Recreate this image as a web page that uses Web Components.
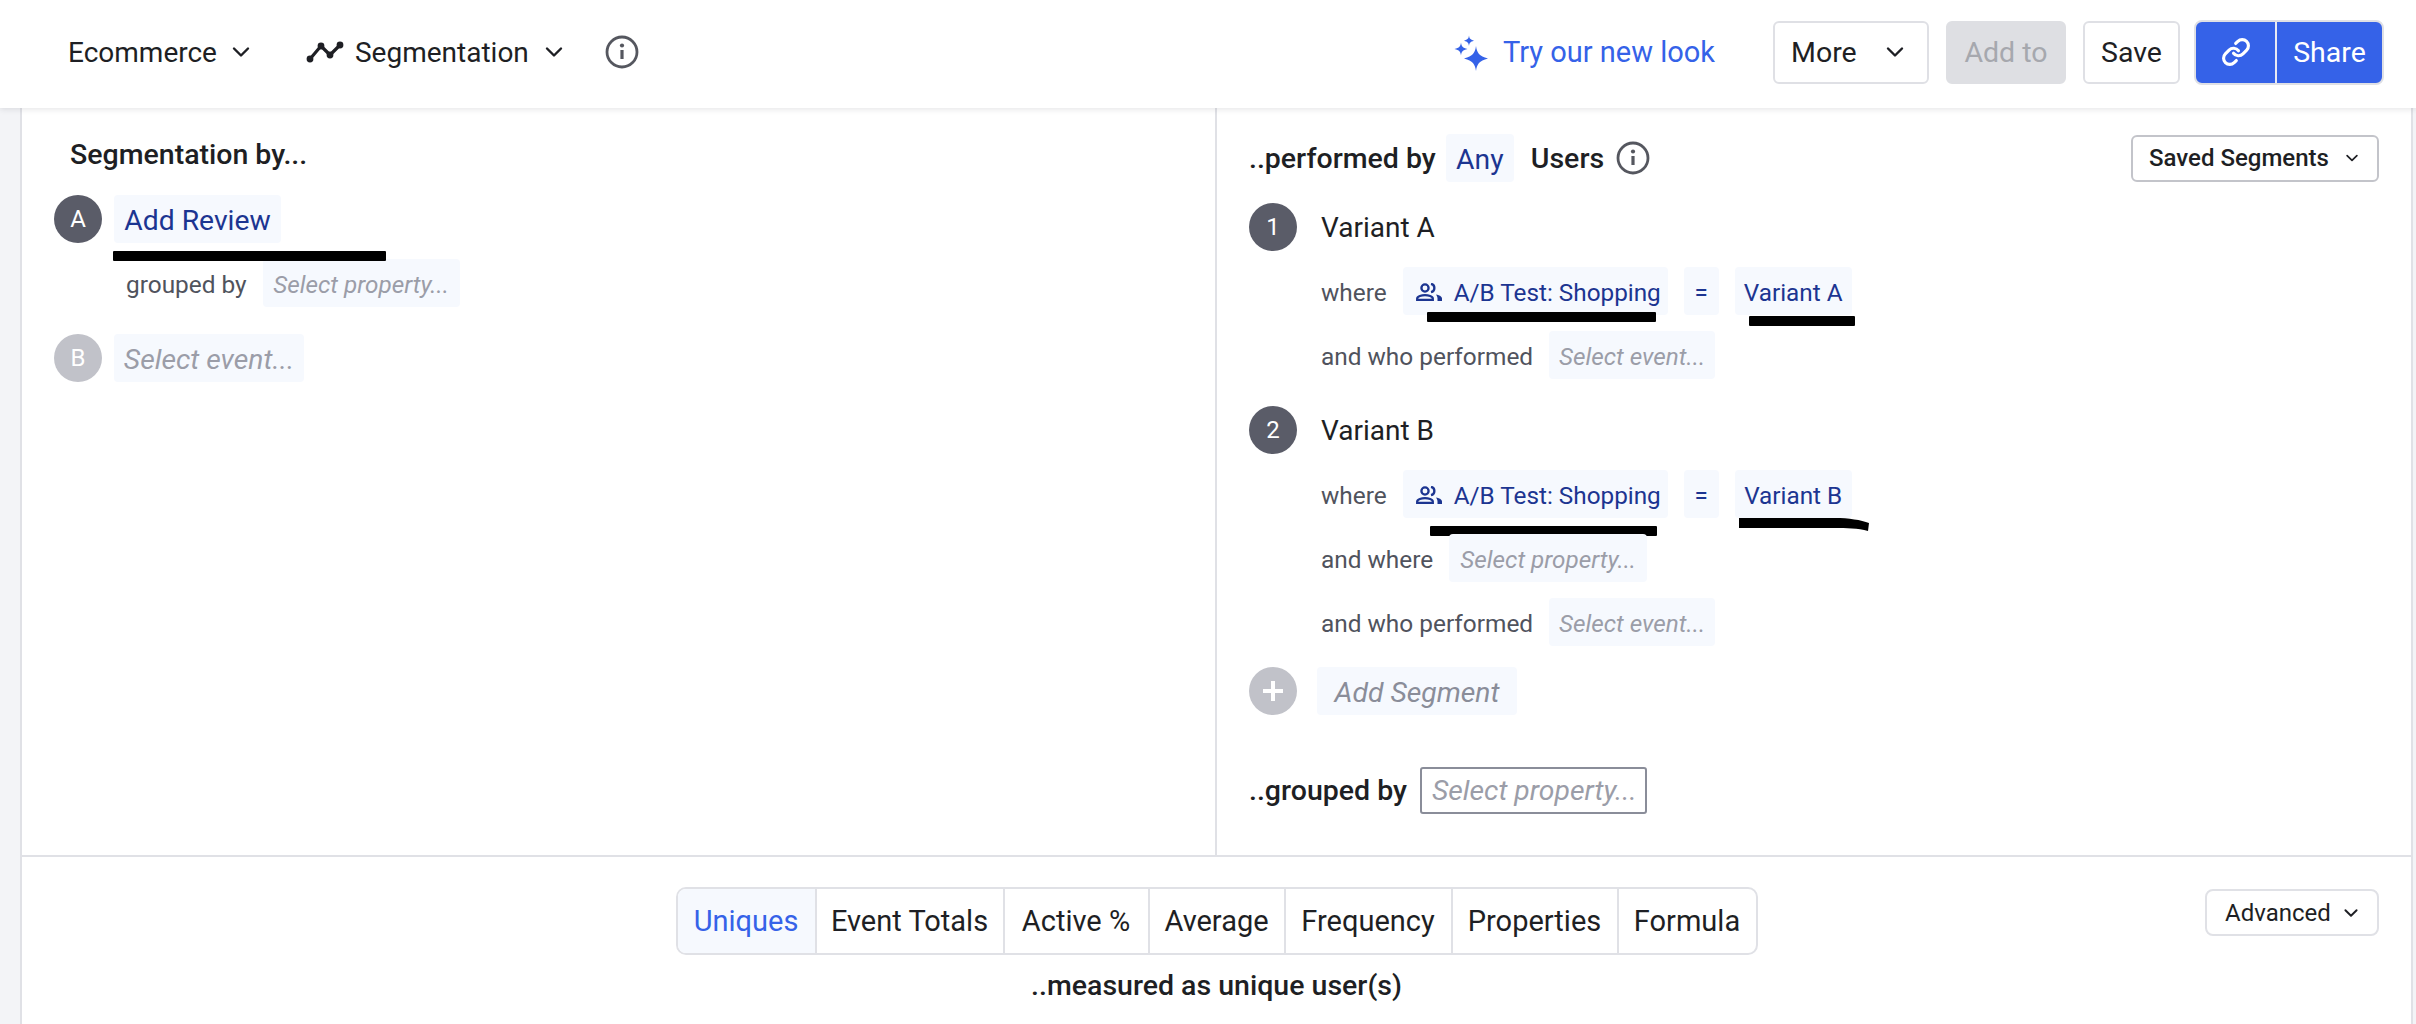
<!DOCTYPE html>
<html>
<head>
<meta charset="utf-8">
<title>Segmentation</title>
<style>
html, body { margin: 0; height: 1024px; overflow: hidden; }
body {
  background: #f3f4f7;
  font-family: Roboto, "Liberation Sans", sans-serif;
  color: #1e1f24;
}
</style>
</head>
<body>
<seg-page>
  <top-bar slot="top"></top-bar>
  <query-panels slot="main"></query-panels>
  <metric-bar slot="bottom"></metric-bar>
</seg-page>

<script>
//shared svg icons
const chevron = (size) => `<svg width="${size}" height="${size}" viewBox="0 0 20 20" fill="none" stroke="currentColor" stroke-width="2.4" stroke-linecap="round" stroke-linejoin="round"><path d="M3 6.5l7 7 7-7"/></svg>`;
const peopleIcon = `<svg width="26" height="18" viewBox="0 0 26 18" fill="none" stroke="#1c3591" stroke-width="2.3">
  <circle cx="9" cy="5" r="3.6"/>
  <path d="M1.200 16.800v-1.300c0-2.300 4.500-3.300 7.800-3.300s7.800 1 7.800 3.300v1.300z"/>
  <path d="M15 .8a4.300 4.300 0 0 1 0 8.400"/>
  <path d="M20 11.500c3 .5 6 1.800 6 4V18h-4.500v-2.500c0-1.500-.6-2.800-1.500-4z" fill="#1c3591" stroke="none"/>
</svg>`;

//page frame, the gutters on both sides are just the body showing through
class SegPage extends HTMLElement {
  constructor() {
    super();
    this.attachShadow({mode: "open"});
    this.shadowRoot.innerHTML = `
    <style>
      :host { display: block; height: 1024px; }
      .frame {
        margin: 0 3px 0 20px;
        height: 916px;
        background: #fff;
        border-left: 2px solid #e0e1e6;
        border-right: 2px solid #e0e1e6;
      }
    </style>
    <slot name="top"></slot>
    <div class="frame">
      <slot name="main"></slot>
      <slot name="bottom"></slot>
    </div>`;
  }
}
customElements.define("seg-page", SegPage);

//info circle
class InfoIcon extends HTMLElement {
  constructor() {
    super();
    this.attachShadow({mode: "open"});
    this.shadowRoot.innerHTML = `
    <style>:host { display: inline-flex; color: #55575f; }</style>
    <svg width="34" height="34" viewBox="0 0 34 34" fill="none" stroke="currentColor">
      <circle cx="17" cy="17" r="15" stroke-width="2.8"/>
      <path d="M17 15v9" stroke-width="3.200"/>
      <circle cx="17" cy="10.500" r="2.100" fill="currentColor" stroke="none"/>
    </svg>`;
  }
}
customElements.define("info-icon", InfoIcon);

//top bar buttons
class ToolButton extends HTMLElement {
  constructor() {
    super();
    this.attachShadow({mode: "open"});
    this.shadowRoot.innerHTML = `
    <style>
      :host {
        display: inline-flex; align-items: center; justify-content: center; box-sizing: border-box;
        height: 63px; border: 2px solid #dfe0e5; border-radius: 6px; background: #fff;
        font-size: 28.5px; color: #1e1f24;
      }
      :host([disabled]) { background: #dedfe3; border-color: #dedfe3; color: #a6a8ae; }
    </style>
    <slot></slot>`;
  }
}
customElements.define("tool-button", ToolButton);

class TopBar extends HTMLElement {
  constructor() {
    super();
    this.attachShadow({mode: "open"});
    this.shadowRoot.innerHTML = `
    <style>
      :host {
        display: flex; align-items: center; box-sizing: border-box; height: 108px;
        padding: 0 32px 4px 68px; background: #fff; position: relative; z-index: 2;
        box-shadow: 0 1px 6px rgba(30, 32, 45, .13);
        font-size: 28px; color: #1e1f24;
      }
      .menu { display: flex; align-items: center; }
      .new-look { display: flex; align-items: center; gap: 13px; margin-left: auto; font-size: 29px; color: #3562e8; }
      .more { width: 156px; padding: 0 22px 0 16px; justify-content: space-between; margin-left: 58px; }
      .add { width: 120px; margin-left: 17px; }
      .save { width: 97px; margin-left: 17px; }
      .share {
        display: flex; margin-left: 14px; height: 65px; box-sizing: border-box; width: 190px;
        background: #3562e8; color: #fff; border: 2px solid #dfe0e5; border-radius: 8px; overflow: hidden;
        font-size: 28.5px;
      }
      .share div { display: flex; align-items: center; justify-content: center; }
      .share .link { width: 79px; border-right: 2px solid #e8eaf4; }
      .share .txt { flex: 1; }
    </style>
    <div class="menu">Ecommerce<span style="display:inline-flex;margin-left:14px">${chevron(20)}</span></div>
    <div class="menu" style="margin-left:55px">
      <svg width="38" height="22" viewBox="0 0 38 22" fill="none" stroke="#1e1f24" stroke-width="3.2" stroke-linejoin="round" style="margin-right:11px">
        <path d="M4 18L15 5l9 9L34 4"/>
        <circle cx="4" cy="18" r="3.4" fill="#1e1f24" stroke="none"/>
        <circle cx="15" cy="5" r="3.4" fill="#1e1f24" stroke="none"/>
        <circle cx="24" cy="14" r="3.4" fill="#1e1f24" stroke="none"/>
        <circle cx="34" cy="4" r="3.4" fill="#1e1f24" stroke="none"/>
      </svg>
      Segmentation<span style="display:inline-flex;margin-left:15px">${chevron(20)}</span>
    </div>
    <info-icon style="margin-left:41px"></info-icon>
    <div class="new-look">
      <svg width="36" height="37" viewBox="0 0 36 37" fill="#3562e8">
        <path d="M22 12c1 7 3 10 12 12.500-9 2.500-11 5.500-12 12.500-1-7-3-10-12-12.500C19 22 21 19 22 12z"/>
        <path d="M7 8.500c.6 4 1.500 5.300 6.500 6.500-5 1.200-5.900 2.500-6.500 6.500-.6-4-1.500-5.300-6.500-6.500C5.500 13.800 6.400 12.500 7 8.500z"/>
        <path d="M15 1.500c.4 3 1.200 4.100 5 5.200-3.800 1.100-4.600 2.200-5 5.200-.4-3-1.200-4.100-5-5.200 3.800-1.100 4.600-2.200 5-5.200z"/>
      </svg>
      <span>Try our new look</span>
    </div>
    <tool-button class="more">More${chevron(20)}</tool-button>
    <tool-button class="add" disabled>Add to</tool-button>
    <tool-button class="save">Save</tool-button>
    <div class="share">
      <div class="link">
        <svg width="30" height="30" viewBox="0 0 24 24" fill="none" stroke="#fff" stroke-width="2.5" stroke-linecap="round" stroke-linejoin="round">
          <path d="M10 13a5 5 0 0 0 7.540.54l3-3a5 5 0 0 0-7.070-7.070l-1.720 1.710"/>
          <path d="M14 11a5 5 0 0 0-7.540-.54l-3 3a5 5 0 0 0 7.070 7.070l1.710-1.710"/>
        </svg>
      </div>
      <div class="txt">Share</div>
    </div>`;
  }
}
customElements.define("top-bar", TopBar);

//round letter at the start of a row
class RoundBadge extends HTMLElement {
  constructor() {
    super();
    this.attachShadow({mode: "open"});
    this.shadowRoot.innerHTML = `
    <style>
      :host {
        display: inline-flex; align-items: center; justify-content: center; flex: none;
        width: 48px; height: 48px; border-radius: 50%;
        background: #5a5c68; color: #fff; font-size: 24px;
      }
      :host([empty]) { background: #c1c2c9; }
    </style>
    <slot></slot>`;
  }
}
customElements.define("round-badge", RoundBadge);

//pale blue picker chip
class QueryChip extends HTMLElement {
  constructor() {
    super();
    this.attachShadow({mode: "open"});
    this.shadowRoot.innerHTML = `
    <style>
      :host {
        display: inline-flex; align-items: center; justify-content: center; gap: 12px; flex: none; box-sizing: border-box;
        height: 48px; padding-top: 2px; border-radius: 4px; background: #f6f9fe; color: #1c3591; font-size: 24.3px;
      }
      :host([hint]) { color: #9b9da8; font-style: italic; }
      :host([iconic]) { justify-content: flex-start; padding-left: 13px; }
    </style>
    <slot></slot>`;
  }
}
customElements.define("query-chip", QueryChip);

//a row of label and chips, can hold marker strokes
class QueryRow extends HTMLElement {
  constructor() {
    super();
    this.attachShadow({mode: "open"});
    this.shadowRoot.innerHTML = `
    <style>
      :host {
        display: flex; align-items: center; gap: 16px; height: 48px; position: relative;
        font-size: 24.4px; color: #50535d;
      }
      ::slotted(span) { padding-top: 2px; }
    </style>
    <slot></slot>`;
  }
}
customElements.define("query-row", QueryRow);

//black marker stroke drawn over the screenshot, left/top come from the row it sits in
class InkMark extends HTMLElement {
  constructor() {
    super();
    this.attachShadow({mode: "open"});
    this.shadowRoot.innerHTML = `
    <style>
      :host { position: absolute; display: block; background: #000; height: 10px; border-radius: 1px; }
      :host([curved]) { background: none; }
      svg { display: block; }
    </style>
    ${this.hasAttribute("curved") ? `<svg width="130" height="13" viewBox="0 0 130 13"><path d="M0 0h96c14 0 26 2 34 5l-1 8c-10-3-22-3-33-3H0z"/></svg>` : ""}`;
  }
}
customElements.define("ink-mark", InkMark);

class QueryPanels extends HTMLElement {
  constructor() {
    super();
    this.attachShadow({mode: "open"});
    this.shadowRoot.innerHTML = `
    <style>
      :host { display: flex; box-sizing: border-box; height: 749px; border-bottom: 2px solid #e0e1e6; }
      .left { width: 1195px; box-sizing: border-box; padding: 27px 0 0 32px; border-right: 2px solid #e0e1e6; flex: none; }
      .right { flex: 1; padding: 26px 32px 0 32px; }
      h2 { margin: 0; font-size: 28.5px; font-weight: 500; line-height: 40px; color: #1e1f24; }
      .left h2 { margin-left: 16px; }
      .line { display: flex; align-items: center; gap: 12px; height: 48px; position: relative; }
      .head { display: flex; align-items: center; height: 48px; font-size: 28.5px; font-weight: 500; color: #1e1f24; }
      .title { font-size: 28px; color: #1e1f24; }
      .saved { margin-left: auto; display: inline-flex; align-items: center; justify-content: space-between; box-sizing: border-box;
        width: 248px; height: 47px; padding: 0 18px 0 16px; border: 2px solid #c3c4ca; border-radius: 6px;
        font-size: 24px; font-weight: 500; }
      .seg { margin-left: 72px; }
      .group-box { display: inline-flex; align-items: center; box-sizing: border-box; width: 227px; height: 47px; margin-left: 13px; padding-left: 10px;
        border: 2px solid #8a8d99; border-radius: 3px; font-size: 28.3px; font-style: italic; font-weight: 400; color: #9b9da8; white-space: nowrap; }
      .gap-16 { margin-top: 16px; }
      .gap-21 { margin-top: 21px; }
      .gap-27 { margin-top: 27px; }
    </style>
    <section class="left">
      <h2>Segmentation by...</h2>
      <div class="line" style="margin-top:20px">
        <round-badge>A</round-badge>
        <query-chip style="width:167px;font-size:28.3px">Add Review</query-chip>
      </div>
      <query-row style="margin:16px 0 0 72px">
        <ink-mark style="left:-13px;top:-8px;width:273px"></ink-mark>
        <span>grouped by</span>
        <query-chip hint style="width:197px">Select property...</query-chip>
      </query-row>
      <div class="line gap-27">
        <round-badge empty>B</round-badge>
        <query-chip hint style="width:190px;font-size:28.3px">Select event...</query-chip>
      </div>
    </section>
    <section class="right">
      <div class="head">
        <span>..performed by</span>
        <query-chip style="width:68px;margin-left:10px;font-size:28.3px;font-weight:400">Any</query-chip>
        <span style="margin-left:17px">Users</span>
        <info-icon style="margin-left:12px"></info-icon>
        <span class="saved">Saved Segments${chevron(14)}</span>
      </div>

      <div class="line" style="margin-top:21px;gap:24px"><round-badge>1</round-badge><span class="title">Variant A</span></div>
      <query-row class="seg gap-16">
        <span>where</span>
        <query-chip iconic style="width:265px">${peopleIcon}A/B Test: Shopping</query-chip>
        <query-chip style="width:35px">=</query-chip>
        <query-chip style="width:117px">Variant A</query-chip>
        <ink-mark style="left:106px;top:45px;width:229px"></ink-mark>
        <ink-mark style="left:428px;top:49px;width:106px"></ink-mark>
      </query-row>
      <query-row class="seg gap-16">
        <span>and who performed</span>
        <query-chip hint style="width:166px">Select event...</query-chip>
      </query-row>

      <div class="line gap-27" style="gap:24px"><round-badge>2</round-badge><span class="title">Variant B</span></div>
      <query-row class="seg gap-16">
        <span>where</span>
        <query-chip iconic style="width:265px">${peopleIcon}A/B Test: Shopping</query-chip>
        <query-chip style="width:35px">=</query-chip>
        <query-chip style="width:117px">Variant B</query-chip>
        <ink-mark style="left:109px;top:56px;width:227px"></ink-mark>
        <ink-mark curved style="left:418px;top:48px;width:130px"></ink-mark>
      </query-row>
      <query-row class="seg gap-16">
        <span>and where</span>
        <query-chip hint style="width:198px">Select property...</query-chip>
      </query-row>
      <query-row class="seg gap-16">
        <span>and who performed</span>
        <query-chip hint style="width:166px">Select event...</query-chip>
      </query-row>

      <div class="line gap-21" style="gap:20px">
        <round-badge empty><svg width="22" height="22" viewBox="0 0 22 22" stroke="#fff" stroke-width="4"><path d="M11 1v20M1 11h20"/></svg></round-badge>
        <query-chip hint style="width:200px;font-size:28.3px;color:#8a8d99">Add Segment</query-chip>
      </div>

      <div class="head" style="margin-top:52px;height:47px">
        <span>..grouped by</span>
        <span class="group-box">Select property...</span>
      </div>
    </section>`;
  }
}
customElements.define("query-panels", QueryPanels);

//the measured as tabs and the advanced button
class MetricBar extends HTMLElement {
  constructor() {
    super();
    this.attachShadow({mode: "open"});
    this.shadowRoot.innerHTML = `
    <style>
      :host { display: grid; grid-template-columns: 1fr auto 1fr; padding-top: 30px; }
      .tabs {
        grid-column: 2; display: grid; grid-template-columns: 137px 188px 145px 136px 167px 166px 139px;
        height: 68px; box-sizing: border-box; border: 2px solid #e0e1e6; border-radius: 10px; overflow: hidden;
        font-size: 29px;
      }
      .tabs div { display: flex; align-items: center; justify-content: center; border-left: 2px solid #e0e1e6; color: #1e1f24; }
      .tabs div:first-child { border-left: 0; background: #f6f9fe; color: #3562e8; }
      .adv {
        justify-self: end; margin: 2px 32px 0 0; display: inline-flex; align-items: center; justify-content: center; gap: 12px; box-sizing: border-box;
        width: 174px; height: 47px; border: 2px solid #e0e1e6; border-radius: 8px; font-size: 24px; color: #1e1f24;
      }
      .note { grid-column: 1 / -1; text-align: center; margin-top: 14px; line-height: 34px; font-size: 28.5px; font-weight: 500; color: #1e1f24; }
    </style>
    <div class="tabs">
      <div>Uniques</div><div>Event Totals</div><div>Active %</div><div>Average</div><div>Frequency</div><div>Properties</div><div>Formula</div>
    </div>
    <div class="adv">Advanced${chevron(16)}</div>
    <div class="note">..measured as unique user(s)</div>`;
  }
}
customElements.define("metric-bar", MetricBar);
</script>
</body>
</html>
